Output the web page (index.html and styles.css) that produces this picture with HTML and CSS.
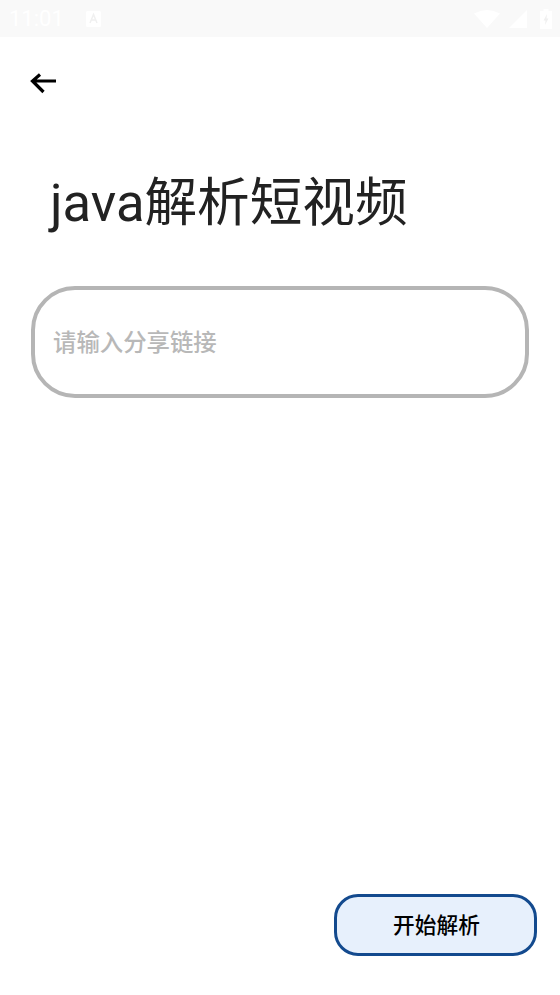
FILE: index.html

```html
<!DOCTYPE html>
<html lang="zh">
<head>
    <meta charset="UTF-8">
    <meta name="viewport" content="width=device-width, initial-scale=1.0">
    <title>java解析短视频</title>
    <link rel="stylesheet" href="styles.css">
</head>
<body>
    <div class="app">
        <div class="status-bar">
            <div class="status-left">
                <span class="status-time">11:01</span>
                <svg class="status-a" width="15" height="16" viewBox="0 0 15 16">
                    <path d="M0 1.500Q0 0 1.500 0H13.500Q15 0 15 1.500V14.500Q15 16 13.500 16H1.500Q0 16 0 14.500Z" fill="#fff"/>
                    <path d="M4 12L7.500 3.500L11 12M5.500 9H9.500" fill="none" stroke="#f0f0f0" stroke-width="1.500"/>
                </svg>
            </div>
            <div class="status-right">
                <svg width="26" height="18" viewBox="0 0 26 18">
                    <path d="M0 3.500Q13 -3.500 26 3.500L13 18Z" fill="#fff"/>
                </svg>
                <svg class="status-signal" width="18" height="18" viewBox="0 0 18 18">
                    <path d="M0 18L18 0V18Z" fill="#fff"/>
                </svg>
                <svg class="status-battery" width="12" height="20" viewBox="0 0 12 20">
                    <path d="M3.500 0H8.500V2H12V20H0V2H3.500Z" fill="#fff"/>
                    <path d="M7 5L3.500 11.500H5.500L5 16L8.500 9.500H6.500Z" fill="#f0f0f0"/>
                </svg>
            </div>
        </div>

        <div class="toolbar">
            <svg class="back-icon" width="28" height="22" viewBox="0 0 28 22">
                <path d="M27 9H3.500M11 2.500L3.500 9L14.500 20" fill="none" stroke="#000" stroke-width="3.200"/>
            </svg>
        </div>

        <h1 class="page-title">java解析短视频</h1>

        <div class="link-input">
            <span class="link-placeholder">请输入分享链接</span>
        </div>

        <div class="actions">
            <button class="start-btn">开始解析</button>
        </div>
    </div>
</body>
</html>
```

FILE: styles.css

```css
/* Base Styles */
* {
    box-sizing: border-box;
}

body {
    margin: 0;
    background-color: #fff;
    font-family: "Roboto", "Noto Sans CJK SC", sans-serif;
}

.app {
    display: flex;
    flex-direction: column;
    height: 995px;
    overflow: hidden;
}

/* Status Bar */
.status-bar {
    display: flex;
    justify-content: space-between;
    align-items: center;
    height: 37px;
    padding: 0 8px 0 9px;
    background-color: #f9f9f9;
}

.status-left,
.status-right {
    display: flex;
    align-items: center;
}

.status-time {
    color: #fff;
    font-size: 22px;
}

.status-a {
    margin-left: 22px;
}

.status-signal {
    margin-left: 9px;
}

.status-battery {
    margin-left: 13px;
}

/* Toolbar */
.toolbar {
    display: flex;
    align-items: center;
    height: 92px;
    padding-left: 29px;
}

/* Title */
.page-title {
    margin: 38px 0 0 50px;
    color: #222;
    font-size: 52.6px;
    font-weight: 400;
    line-height: 72px;
}

/* Input */
.link-input {
    display: flex;
    align-items: center;
    height: 112px;
    margin: 47px 31px 0;
    padding: 0 0 3px 18px;
    border: 4px solid #b5b5b5;
    border-radius: 44px;
}

.link-placeholder {
    color: #b8b8b8;
    font-size: 23.4px;
    font-weight: 500;
}

/* Bottom Action */
.actions {
    display: flex;
    justify-content: flex-end;
    margin-top: auto;
    padding: 0 23px 39px 0;
}

.start-btn {
    width: 203px;
    height: 62px;
    padding: 0 0 4px 2px;
    border: 3px solid #134a8e;
    border-radius: 24px;
    background-color: #e7f0fc;
    color: #000;
    font-family: inherit;
    font-size: 21.7px;
    font-weight: 500;
}
```
